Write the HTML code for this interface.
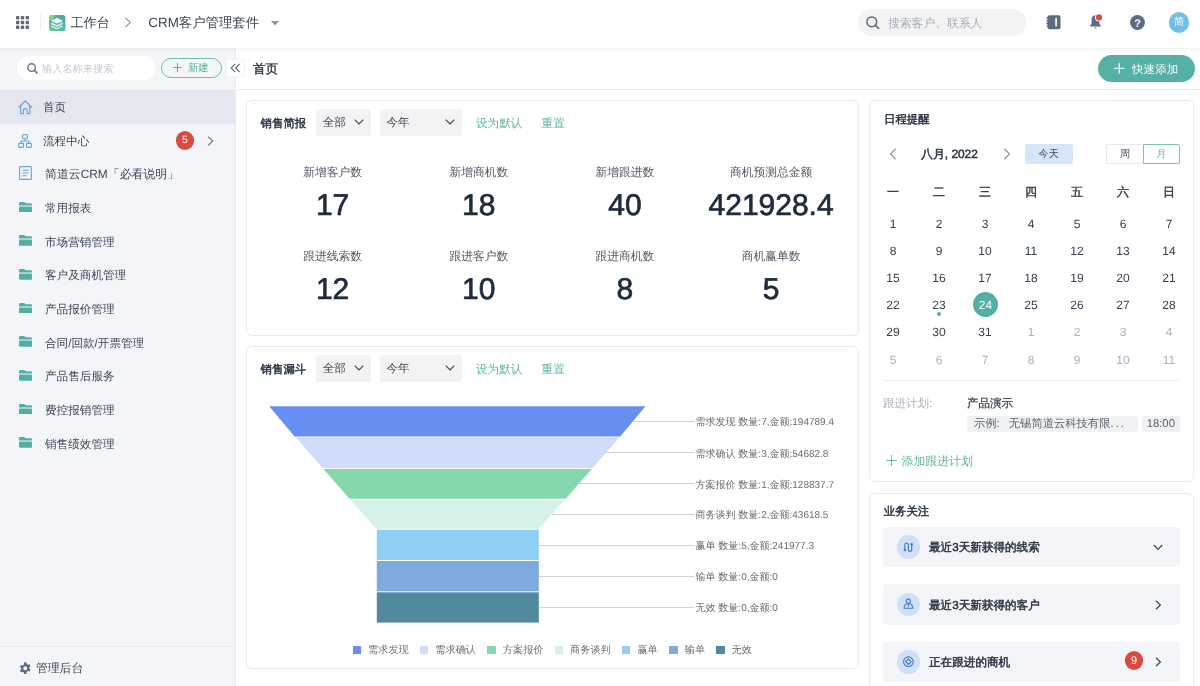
<!DOCTYPE html>
<html><head><meta charset="utf-8">
<style>
*{box-sizing:border-box;margin:0;padding:0}
html,body{width:1200px;height:686px;overflow:hidden;background:#fff;text-rendering:geometricPrecision;font-family:"Liberation Sans",sans-serif;color:#3b4656}
.a{position:absolute;white-space:nowrap}
svg{display:block}
#hdr{position:absolute;left:0;top:0;width:1200px;height:48px;background:#fff;z-index:3;box-shadow:0 1px 4px rgba(0,0,0,0.08)}
#side{position:absolute;left:0;top:48px;width:236px;height:638px;background:#f4f5f9;border-right:1px solid #e9eaee}
.nav{position:absolute;left:0;width:235px;height:33.6px}
.nav .t{position:absolute;left:43px;top:1px;line-height:33.6px;font-size:11.6px;color:#3b4656}
.nav .ic{position:absolute;left:18px;top:10px}
.card{position:absolute;background:#fff;border:1px solid #ebebeb;border-radius:6px;box-shadow:0 0 1px rgba(0,0,0,0.04)}
.dd{position:absolute;background:#f3f3f4;border-radius:3px;height:26.6px;font-size:11.6px;line-height:28.2px;color:#3b4656;padding-left:7px}
.lnk{color:#5db5a4;font-size:11.6px;margin-top:1.2px}
.stl{font-size:11.75px;margin-top:1px;color:#535a66;text-align:center;width:146px}
.stn{font-size:30px;color:#1e2b3c;-webkit-text-stroke:0.7px #1e2b3c;text-align:center;width:146px;margin-top:2.3px}
.ctl{font-size:11.4px;position:absolute;margin-top:1.5px;color:#283240;-webkit-text-stroke:0.45px #283240}
.cal{position:absolute;width:46px;text-align:center;font-size:12px;color:#364050}
.g{color:#a9b3c2}
.fl{font-size:10px;color:#6c6c6c;margin-top:2px}
.lg{font-size:10.2px;margin-left:-1px;margin-top:1px;color:#6e6e6e}
.bz{position:absolute;left:883px;width:296.8px;height:40.6px;background:#f3f5f9;border-radius:4px}
.bz .ci{position:absolute;left:13.6px;top:8.6px;width:23.6px;height:23.6px;border-radius:50%;background:#cfe0f7}
.bz .t{position:absolute;left:46px;top:1.5px;line-height:40.6px;font-size:11.6px;color:#283240;-webkit-text-stroke:0.45px #283240}
</style></head>
<body>
<div id="root" style="position:absolute;left:0;top:0;width:1200px;height:686px;will-change:transform">
<!-- HEADER -->
<div id="hdr">
  <svg class="a" style="left:16px;top:16px" width="13" height="13" viewBox="0 0 13 13" fill="#5d6b82">
    <rect x="0" y="0" width="3.4" height="3.4" rx="0.8"/><rect x="4.8" y="0" width="3.4" height="3.4" rx="0.8"/><rect x="9.6" y="0" width="3.4" height="3.4" rx="0.8"/>
    <rect x="0" y="4.8" width="3.4" height="3.4" rx="0.8"/><rect x="4.8" y="4.8" width="3.4" height="3.4" rx="0.8"/><rect x="9.6" y="4.8" width="3.4" height="3.4" rx="0.8"/>
    <rect x="0" y="9.6" width="3.4" height="3.4" rx="0.8"/><rect x="4.8" y="9.6" width="3.4" height="3.4" rx="0.8"/><rect x="9.6" y="9.6" width="3.4" height="3.4" rx="0.8"/>
  </svg>
  <div class="a" style="left:40px;top:14px;width:1px;height:16px;background:#eceef2"></div>
  <svg class="a" style="left:49.2px;top:14.6px" width="16.6" height="16.4" viewBox="0 0 16.6 16.4">
    <defs><linearGradient id="lg1" x1="0" y1="1" x2="1" y2="0"><stop offset="0" stop-color="#6cc79b"/><stop offset="0.55" stop-color="#4eb2a0"/><stop offset="1" stop-color="#47a99f"/></linearGradient>
    <clipPath id="cp1"><rect x="0" y="0" width="16.6" height="16.4" rx="3.3"/></clipPath></defs>
    <g clip-path="url(#cp1)">
    <rect x="0" y="0" width="16.6" height="16.4" fill="url(#lg1)"/>
    <circle cx="0" cy="0" r="5.6" fill="#8dd07e"/>
    <path d="M9 16.4 L16.6 9 V16.4 Z" fill="#5bc2a2" opacity="0.6"/>
    </g>
    <path d="M2.0 5.7 L8.3 2.9 L14.0 5.9 L7.8 8.4 Z" fill="#fff"/>
    <path d="M2.2 8.3 L7.8 10.9 L13.9 8.2" fill="none" stroke="#fff" stroke-opacity="0.85" stroke-width="1.5"/>
    <path d="M2.2 11.1 L7.8 13.6 L13.9 11.0" fill="none" stroke="#fff" stroke-opacity="0.75" stroke-width="1.5"/>
  </svg>
  <div class="a" style="left:70.5px;top:13px;font-size:13.1px;line-height:20px;color:#3b4656">工作台</div>
  <svg class="a" style="left:124px;top:17px" width="8" height="11" viewBox="0 0 8 11"><path d="M1.5 0.8 L6.3 5.5 L1.5 10.2" fill="none" stroke="#8c97a8" stroke-width="1.1"/></svg>
  <div class="a" style="left:148.3px;top:12.5px;font-size:13.4px;line-height:20px;color:#3b4656">CRM客户管理套件</div>
  <svg class="a" style="left:270.5px;top:21px" width="8" height="5" viewBox="0 0 8 5"><path d="M0 0 L8 0 L4 4.5 Z" fill="#8a98ae"/></svg>

  <div class="a" style="left:858px;top:9px;width:168px;height:27px;border-radius:14px;background:#f3f3f4"></div>
  <svg class="a" style="left:866px;top:16.4px" width="14" height="13" viewBox="0 0 14 13"><circle cx="5.8" cy="5.8" r="4.9" fill="none" stroke="#5d6b82" stroke-width="1.5"/><path d="M9.4 9.4 L12.6 12.4" stroke="#5d6b82" stroke-width="1.6" stroke-linecap="round"/></svg>
  <div class="a" style="left:888px;top:13.8px;font-size:11.8px;line-height:19px;color:#a6aebb">搜索客户、联系人</div>

  <svg class="a" style="left:1045.5px;top:14.5px" width="15" height="15" viewBox="0 0 15 15">
    <rect x="1.5" y="0.2" width="13" height="14" rx="2" fill="#5d6b82"/>
    <rect x="9.3" y="2.8" width="1.6" height="8.6" fill="#fff"/>
    <rect x="0.3" y="2.6" width="2.4" height="1.2" rx="0.6" fill="#5d6b82"/><rect x="0.3" y="5.2" width="2.4" height="1.2" rx="0.6" fill="#5d6b82"/><rect x="0.3" y="7.8" width="2.4" height="1.2" rx="0.6" fill="#5d6b82"/><rect x="0.3" y="10.4" width="2.4" height="1.2" rx="0.6" fill="#5d6b82"/>
  </svg>
  <svg class="a" style="left:1088px;top:13px" width="16" height="17" viewBox="0 0 16 17">
    <path d="M7.5 2.2 C4.6 2.2 3.6 4.8 3.6 7 L3.6 10.6 L1.8 13.4 L13.2 13.4 L11.4 10.6 L11.4 7 C11.4 4.8 10.4 2.2 7.5 2.2 Z" fill="#5d6b82"/>
    <path d="M5.8 14.4 Q7.5 16.6 9.2 14.4 Z" fill="#5d6b82"/>
    <circle cx="11" cy="4.4" r="4.2" fill="#fff"/>
    <circle cx="11" cy="4.4" r="3.1" fill="#df4b41"/>
  </svg>
  <svg class="a" style="left:1130px;top:15.2px" width="15" height="15" viewBox="0 0 15 15"><circle cx="7.5" cy="7.5" r="7.4" fill="#5d6b82"/><text x="7.5" y="11.6" text-anchor="middle" font-family="Liberation Sans" font-weight="bold" font-size="11" fill="#fff">?</text></svg>
  <div class="a" style="left:1168.7px;top:12.3px;width:20.6px;height:20.6px;border-radius:50%;background:#70bfe7;color:#fff;font-size:10.2px;line-height:21.6px;text-align:center">简</div>
</div>

<!-- SIDEBAR -->
<div id="side">
  <div class="a" style="left:17px;top:8px;width:138px;height:24px;border-radius:12px;background:#fff"></div>
  <svg class="a" style="left:26.5px;top:14.8px" width="11" height="11" viewBox="0 0 11 11"><circle cx="4.6" cy="4.6" r="3.8" fill="none" stroke="#656f82" stroke-width="1.4"/><path d="M7.4 7.4 L10 10" stroke="#656f82" stroke-width="1.5" stroke-linecap="round"/></svg>
  <div class="a" style="left:42px;top:13.8px;font-size:10.2px;line-height:16px;color:#c5cad3">输入名称来搜索</div>
  <div class="a" style="left:160.5px;top:10px;width:61.5px;height:20px;border-radius:10px;border:1px solid #6fbfb0;background:transparent"></div>
  <svg class="a" style="left:173px;top:15px" width="9" height="9" viewBox="0 0 9 9"><path d="M4.5 0 V9 M0 4.5 H9" stroke="#5db3a3" stroke-width="1.1"/></svg>
  <div class="a" style="left:188px;top:13.2px;font-size:10.25px;line-height:16px;color:#5db3a3">新建</div>

  <div class="nav" style="top:42.00px;background:#e4e7ef"><svg class="ic" style="left:18px;top:9.5px" width="15" height="15" viewBox="0 0 15 15"><path d="M1.0 7.0 L7.25 1.0 L13.5 7.0 M2.7 5.6 V13.6 H5.4 V10.4 Q5.4 8.6 7.25 8.6 Q9.1 8.6 9.1 10.4 V13.6 H11.8 V5.6" fill="none" stroke="#6aa3d8" stroke-width="1.15" stroke-linejoin="round" stroke-linecap="round"/></svg><div class="t">首页</div></div>
  <div class="nav" style="top:75.67px"><svg class="ic" style="left:18px;top:10px" width="14" height="14" viewBox="0 0 14 14" fill="none" stroke="#6aa3d8" stroke-width="1.15"><rect x="4.6" y="0.7" width="4.8" height="4" rx="0.6"/><rect x="0.7" y="9.3" width="4.8" height="4" rx="0.6"/><rect x="8.5" y="9.3" width="4.8" height="4" rx="0.6"/><path d="M7 4.7 V7 M3.1 9.3 V7 H10.9 V9.3"/></svg><div class="t">流程中心</div>
    <div class="a" style="left:175.5px;top:7.8px;width:18.6px;height:18.6px;border-radius:50%;background:#d94a3f;color:#fff;font-size:10.5px;line-height:18.6px;text-align:center">5</div>
    <svg class="a" style="left:206.6px;top:12px" width="7" height="10" viewBox="0 0 7 10"><path d="M1 0.6 L5.8 5 L1 9.4" fill="none" stroke="#6b7689" stroke-width="1.2"/></svg>
  </div>
  <div class="nav" style="top:109.34px"><svg class="ic" style="left:19px;top:9px" width="13" height="14" viewBox="0 0 13 14" fill="none" stroke="#6aa3d8" stroke-width="1.1"><rect x="0.6" y="0.6" width="11.8" height="12.8" rx="1"/><path d="M3.4 4.3 H9.6 M3.4 7 H9.6 M3.4 9.7 H7.6"/></svg><div class="t" style="left:45px;font-size:11.9px">简道云CRM「必看说明」</div></div>
  <div class="nav" style="top:143.01px"><svg class="ic" style="left:18.6px;top:10.6px" width="13.2" height="10.8" viewBox="0 0 13.2 10.8" fill="#52ada3"><path d="M0 1.3 Q0 0 1.3 0 H5.3 L6.7 1.3 H11.9 Q13.2 1.3 13.2 2.6 V3.6 H0 Z"/><rect x="0" y="4.6" width="13.2" height="6.2" rx="1.3"/></svg><div class="t" style="left:45px">常用报表</div></div>
  <div class="nav" style="top:176.68px"><svg class="ic" style="left:18.6px;top:10.6px" width="13.2" height="10.8" viewBox="0 0 13.2 10.8" fill="#52ada3"><path d="M0 1.3 Q0 0 1.3 0 H5.3 L6.7 1.3 H11.9 Q13.2 1.3 13.2 2.6 V3.6 H0 Z"/><rect x="0" y="4.6" width="13.2" height="6.2" rx="1.3"/></svg><div class="t" style="left:45px">市场营销管理</div></div>
  <div class="nav" style="top:210.35px"><svg class="ic" style="left:18.6px;top:10.6px" width="13.2" height="10.8" viewBox="0 0 13.2 10.8" fill="#52ada3"><path d="M0 1.3 Q0 0 1.3 0 H5.3 L6.7 1.3 H11.9 Q13.2 1.3 13.2 2.6 V3.6 H0 Z"/><rect x="0" y="4.6" width="13.2" height="6.2" rx="1.3"/></svg><div class="t" style="left:45px">客户及商机管理</div></div>
  <div class="nav" style="top:244.02px"><svg class="ic" style="left:18.6px;top:10.6px" width="13.2" height="10.8" viewBox="0 0 13.2 10.8" fill="#52ada3"><path d="M0 1.3 Q0 0 1.3 0 H5.3 L6.7 1.3 H11.9 Q13.2 1.3 13.2 2.6 V3.6 H0 Z"/><rect x="0" y="4.6" width="13.2" height="6.2" rx="1.3"/></svg><div class="t" style="left:45px">产品报价管理</div></div>
  <div class="nav" style="top:277.69px"><svg class="ic" style="left:18.6px;top:10.6px" width="13.2" height="10.8" viewBox="0 0 13.2 10.8" fill="#52ada3"><path d="M0 1.3 Q0 0 1.3 0 H5.3 L6.7 1.3 H11.9 Q13.2 1.3 13.2 2.6 V3.6 H0 Z"/><rect x="0" y="4.6" width="13.2" height="6.2" rx="1.3"/></svg><div class="t" style="left:45px">合同/回款/开票管理</div></div>
  <div class="nav" style="top:311.36px"><svg class="ic" style="left:18.6px;top:10.6px" width="13.2" height="10.8" viewBox="0 0 13.2 10.8" fill="#52ada3"><path d="M0 1.3 Q0 0 1.3 0 H5.3 L6.7 1.3 H11.9 Q13.2 1.3 13.2 2.6 V3.6 H0 Z"/><rect x="0" y="4.6" width="13.2" height="6.2" rx="1.3"/></svg><div class="t" style="left:45px">产品售后服务</div></div>
  <div class="nav" style="top:345.03px"><svg class="ic" style="left:18.6px;top:10.6px" width="13.2" height="10.8" viewBox="0 0 13.2 10.8" fill="#52ada3"><path d="M0 1.3 Q0 0 1.3 0 H5.3 L6.7 1.3 H11.9 Q13.2 1.3 13.2 2.6 V3.6 H0 Z"/><rect x="0" y="4.6" width="13.2" height="6.2" rx="1.3"/></svg><div class="t" style="left:45px">费控报销管理</div></div>
  <div class="nav" style="top:378.70px"><svg class="ic" style="left:18.6px;top:10.6px" width="13.2" height="10.8" viewBox="0 0 13.2 10.8" fill="#52ada3"><path d="M0 1.3 Q0 0 1.3 0 H5.3 L6.7 1.3 H11.9 Q13.2 1.3 13.2 2.6 V3.6 H0 Z"/><rect x="0" y="4.6" width="13.2" height="6.2" rx="1.3"/></svg><div class="t" style="left:45px">销售绩效管理</div></div>
  <div class="a" style="left:0;top:598px;width:235px;height:1px;background:#e8e9ee"></div>
  <svg class="a" style="left:19px;top:613.5px" width="12.5" height="12.5" viewBox="0 0 24 24"><path fill="#5d6b82" fill-rule="evenodd" d="M10 0.5h4l.7 3.2c.9.3 1.7.8 2.4 1.4l3.1-1 2 3.5-2.4 2.2c.2.9.2 1.9 0 2.8l2.4 2.2-2 3.5-3.1-1c-.7.6-1.5 1.1-2.4 1.4L14 23.5h-4l-.7-3.2c-.9-.3-1.7-.8-2.4-1.4l-3.1 1-2-3.5 2.4-2.2c-.2-.9-.2-1.9 0-2.8L1.8 9.2l2-3.5 3.1 1c.7-.6 1.5-1.1 2.4-1.4z M12 8.2a3.8 3.8 0 1 0 0 7.6 3.8 3.8 0 0 0 0-7.6z"/></svg>
  <div class="a" style="left:36px;top:612.3px;font-size:11.8px;line-height:16px;color:#3b4656">管理后台</div>
</div>

<!-- MAIN SUBHEADER -->
<div class="a" style="left:236px;top:48px;width:964px;height:41.5px;border-bottom:1px solid #ececee;background:#fff"></div>
<div class="a" style="left:225.9px;top:58.7px;width:19.4px;height:18.6px;border-radius:3px;background:#fff;border:1px solid #eef0f3;z-index:2"></div>
<svg class="a" style="left:229.8px;top:63px;z-index:2" width="11" height="10" viewBox="0 0 11 10"><path d="M5.2 0.8 L1.2 5 L5.2 9.2 M9.6 0.8 L5.6 5 L9.6 9.2" fill="none" stroke="#5d6b82" stroke-width="1.2"/></svg>
<div class="a" style="left:253px;top:59px;font-size:12.6px;line-height:20px;color:#2b3441;-webkit-text-stroke:0.35px #2b3441">首页</div>
<div class="a" style="left:1098px;top:55px;width:97px;height:27px;border-radius:13.5px;background:#55b0a5"></div>
<svg class="a" style="left:1114px;top:63.3px" width="10.5" height="10.5" viewBox="0 0 10 10"><path d="M5 0 V10 M0 5 H10" stroke="#fff" stroke-width="1.1"/></svg>
<div class="a" style="left:1132px;top:61.7px;font-size:11.6px;line-height:16px;color:#fff">快速添加</div>

<!-- CARD 1 -->
<div class="card" style="left:246px;top:100.3px;width:612.5px;height:235.7px"></div>
<div class="a ctl" style="left:260.6px;top:114px;line-height:16px">销售简报</div>
<div class="dd" style="left:315.7px;top:109.4px;width:55.3px">全部</div>
<svg class="a" style="left:353.5px;top:119px" width="10" height="6" viewBox="0 0 10 6"><path d="M0.7 0.7 L5 5 L9.3 0.7" fill="none" stroke="#3b4656" stroke-width="1.2"/></svg>
<div class="dd" style="left:379.5px;top:109.4px;width:82.2px">今年</div>
<svg class="a" style="left:444.5px;top:119px" width="10" height="6" viewBox="0 0 10 6"><path d="M0.7 0.7 L5 5 L9.3 0.7" fill="none" stroke="#3b4656" stroke-width="1.2"/></svg>
<div class="a lnk" style="left:476px;top:114.5px;line-height:16px">设为默认</div>
<div class="a lnk" style="left:541.6px;top:114.5px;line-height:16px">重置</div>
<div class="a stl" style="left:259.6px;top:164.0px;line-height:16px">新增客户数</div>
<div class="a stn" style="left:259.6px;top:186.0px;line-height:36px">17</div>
<div class="a stl" style="left:405.8px;top:164.0px;line-height:16px">新增商机数</div>
<div class="a stn" style="left:405.8px;top:186.0px;line-height:36px">18</div>
<div class="a stl" style="left:551.9px;top:164.0px;line-height:16px">新增跟进数</div>
<div class="a stn" style="left:551.9px;top:186.0px;line-height:36px">40</div>
<div class="a stl" style="left:698.1px;top:164.0px;line-height:16px">商机预测总金额</div>
<div class="a stn" style="left:698.1px;top:186.0px;line-height:36px">421928.4</div>
<div class="a stl" style="left:259.6px;top:248.0px;line-height:16px">跟进线索数</div>
<div class="a stn" style="left:259.6px;top:270.0px;line-height:36px">12</div>
<div class="a stl" style="left:405.8px;top:248.0px;line-height:16px">跟进客户数</div>
<div class="a stn" style="left:405.8px;top:270.0px;line-height:36px">10</div>
<div class="a stl" style="left:551.9px;top:248.0px;line-height:16px">跟进商机数</div>
<div class="a stn" style="left:551.9px;top:270.0px;line-height:36px">8</div>
<div class="a stl" style="left:698.1px;top:248.0px;line-height:16px">商机赢单数</div>
<div class="a stn" style="left:698.1px;top:270.0px;line-height:36px">5</div>

<!-- CARD 2 -->
<div class="card" style="left:246px;top:346.4px;width:612.5px;height:322.6px"></div>
<div class="a ctl" style="left:260.6px;top:360px;line-height:16px">销售漏斗</div>
<div class="dd" style="left:315.7px;top:355.4px;width:55.3px">全部</div>
<svg class="a" style="left:353.5px;top:365px" width="10" height="6" viewBox="0 0 10 6"><path d="M0.7 0.7 L5 5 L9.3 0.7" fill="none" stroke="#3b4656" stroke-width="1.2"/></svg>
<div class="dd" style="left:379.5px;top:355.4px;width:82.2px">今年</div>
<svg class="a" style="left:444.5px;top:365px" width="10" height="6" viewBox="0 0 10 6"><path d="M0.7 0.7 L5 5 L9.3 0.7" fill="none" stroke="#3b4656" stroke-width="1.2"/></svg>
<div class="a lnk" style="left:476px;top:360.5px;line-height:16px">设为默认</div>
<div class="a lnk" style="left:541.6px;top:360.5px;line-height:16px">重置</div>
<svg class="a" style="left:0;top:0" width="1200" height="686" viewBox="0 0 1200 686">
  <polygon points="269.2,406.2 645.5,406.2 620.2,436.4 294.6,436.4" fill="#678ef0"/>
  <polygon points="296.0,437.4 619.4,437.4 592.6,467.9 322.6,467.9" fill="#d1dcf8"/>
  <polygon points="323.4,468.9 591.8,468.9 565.7,498.7 349.5,498.7" fill="#84d8ab"/>
  <polygon points="350.4,499.7 565.0,499.7 539.1,528.7 376.3,528.7" fill="#d6f1e5"/>
  <rect x="376.8" y="529.7" width="162" height="30.3" fill="#8ecff3"/>
  <rect x="376.8" y="561" width="162" height="30.3" fill="#7eaadd"/>
  <rect x="376.8" y="592.3" width="162" height="30.3" fill="#51899e"/>
  <g stroke="#d2d2d2" stroke-width="1">
    <path d="M632.8 421.5 H694.5"/><path d="M605.8 452.5 H694.5"/><path d="M578.8 483.5 H694.5"/><path d="M552 514.5 H694.5"/>
    <path d="M538.8 545.5 H694.5"/><path d="M538.8 576.5 H694.5"/><path d="M538.8 607.5 H694.5"/>
  </g>
</svg>
<div class="a fl" style="left:695.6px;top:414.3px;line-height:14px">需求发现 数量:7,金额:194789.4</div>
<div class="a fl" style="left:695.6px;top:445.5px;line-height:14px">需求确认 数量:3,金额:54682.8</div>
<div class="a fl" style="left:695.6px;top:476.8px;line-height:14px">方案报价 数量:1,金额:128837.7</div>
<div class="a fl" style="left:695.6px;top:507.2px;line-height:14px">商务谈判 数量:2,金额:43618.5</div>
<div class="a fl" style="left:695.6px;top:538.0px;line-height:14px">赢单 数量:5,金额:241977.3</div>
<div class="a fl" style="left:695.6px;top:569.0px;line-height:14px">输单 数量:0,金额:0</div>
<div class="a fl" style="left:695.6px;top:600.3px;line-height:14px">无效 数量:0,金额:0</div>
<div class="a" style="left:352.5px;top:645.5px;width:8.6px;height:8.4px;background:#678ef0"></div><div class="a lg" style="left:369.0px;top:642px;line-height:15px">需求发现</div>
<div class="a" style="left:419.8px;top:645.5px;width:8.6px;height:8.4px;background:#d1dcf8"></div><div class="a lg" style="left:436.3px;top:642px;line-height:15px">需求确认</div>
<div class="a" style="left:487.3px;top:645.5px;width:8.6px;height:8.4px;background:#84d8ab"></div><div class="a lg" style="left:503.8px;top:642px;line-height:15px">方案报价</div>
<div class="a" style="left:554.5px;top:645.5px;width:8.6px;height:8.4px;background:#d6f1e5"></div><div class="a lg" style="left:571.0px;top:642px;line-height:15px">商务谈判</div>
<div class="a" style="left:621.9px;top:645.5px;width:8.6px;height:8.4px;background:#8ecff3"></div><div class="a lg" style="left:638.4px;top:642px;line-height:15px">赢单</div>
<div class="a" style="left:669.2px;top:645.5px;width:8.6px;height:8.4px;background:#7eaadd"></div><div class="a lg" style="left:685.7px;top:642px;line-height:15px">输单</div>
<div class="a" style="left:716.0px;top:645.5px;width:8.6px;height:8.4px;background:#51899e"></div><div class="a lg" style="left:732.5px;top:642px;line-height:15px">无效</div>

<!-- RIGHT CARD 1 -->
<div class="card" style="left:869px;top:100.3px;width:324.8px;height:381.3px"></div>
<div class="a ctl" style="left:884px;top:110px;line-height:16px">日程提醒</div>
<svg class="a" style="left:888.5px;top:148px" width="8" height="12" viewBox="0 0 8 12"><path d="M6.8 0.8 L1.4 6 L6.8 11.2" fill="none" stroke="#8c97a8" stroke-width="1.2"/></svg>
<div class="a" style="left:921px;top:146.3px;font-size:11.9px;line-height:16px;color:#2b3441;-webkit-text-stroke:0.5px #2b3441">八月, 2022</div>
<svg class="a" style="left:1002.5px;top:148px" width="8" height="12" viewBox="0 0 8 12"><path d="M1.2 0.8 L6.6 6 L1.2 11.2" fill="none" stroke="#8c97a8" stroke-width="1.2"/></svg>
<div class="a" style="left:1024.5px;top:143.5px;width:48.5px;height:20.5px;border-radius:2px;background:#d6e5f9;font-size:10.2px;line-height:21.6px;text-align:center;color:#3b4656">今天</div>
<div class="a" style="left:1106.2px;top:143.5px;width:37px;height:20.5px;border:1px solid #e8e9ec;border-right:none;border-radius:2px 0 0 2px;font-size:10.2px;line-height:19.4px;text-align:center;color:#3b4656">周</div>
<div class="a" style="left:1143px;top:143.5px;width:36.6px;height:20.5px;border:1px solid #7cc6b6;border-radius:0 2px 2px 0;font-size:10.2px;line-height:19.4px;text-align:center;color:#6abcab">月</div>
<div class="cal" style="left:870.0px;top:184px;line-height:16px;-webkit-text-stroke:0.4px #2b3441">一</div>
<div class="cal" style="left:916.0px;top:184px;line-height:16px;-webkit-text-stroke:0.4px #2b3441">二</div>
<div class="cal" style="left:962.0px;top:184px;line-height:16px;-webkit-text-stroke:0.4px #2b3441">三</div>
<div class="cal" style="left:1008.0px;top:184px;line-height:16px;-webkit-text-stroke:0.4px #2b3441">四</div>
<div class="cal" style="left:1054.0px;top:184px;line-height:16px;-webkit-text-stroke:0.4px #2b3441">五</div>
<div class="cal" style="left:1100.0px;top:184px;line-height:16px;-webkit-text-stroke:0.4px #2b3441">六</div>
<div class="cal" style="left:1146.0px;top:184px;line-height:16px;-webkit-text-stroke:0.4px #2b3441">日</div>
<div class="cal" style="left:870.0px;top:216.0px;line-height:16px">1</div>
<div class="cal" style="left:916.0px;top:216.0px;line-height:16px">2</div>
<div class="cal" style="left:962.0px;top:216.0px;line-height:16px">3</div>
<div class="cal" style="left:1008.0px;top:216.0px;line-height:16px">4</div>
<div class="cal" style="left:1054.0px;top:216.0px;line-height:16px">5</div>
<div class="cal" style="left:1100.0px;top:216.0px;line-height:16px">6</div>
<div class="cal" style="left:1146.0px;top:216.0px;line-height:16px">7</div>
<div class="cal" style="left:870.0px;top:242.7px;line-height:16px">8</div>
<div class="cal" style="left:916.0px;top:242.7px;line-height:16px">9</div>
<div class="cal" style="left:962.0px;top:242.7px;line-height:16px">10</div>
<div class="cal" style="left:1008.0px;top:242.7px;line-height:16px">11</div>
<div class="cal" style="left:1054.0px;top:242.7px;line-height:16px">12</div>
<div class="cal" style="left:1100.0px;top:242.7px;line-height:16px">13</div>
<div class="cal" style="left:1146.0px;top:242.7px;line-height:16px">14</div>
<div class="cal" style="left:870.0px;top:269.5px;line-height:16px">15</div>
<div class="cal" style="left:916.0px;top:269.5px;line-height:16px">16</div>
<div class="cal" style="left:962.0px;top:269.5px;line-height:16px">17</div>
<div class="cal" style="left:1008.0px;top:269.5px;line-height:16px">18</div>
<div class="cal" style="left:1054.0px;top:269.5px;line-height:16px">19</div>
<div class="cal" style="left:1100.0px;top:269.5px;line-height:16px">20</div>
<div class="cal" style="left:1146.0px;top:269.5px;line-height:16px">21</div>
<div class="cal" style="left:870.0px;top:296.6px;line-height:16px">22</div>
<div class="cal" style="left:916.0px;top:296.6px;line-height:16px">23</div>
<div class="a" style="left:972.7px;top:291.8px;width:25.6px;height:25.6px;border-radius:50%;background:#53aea3"></div><div class="cal" style="left:962.5px;top:296.6px;line-height:16px;color:#fff">24</div>
<div class="cal" style="left:1008.0px;top:296.6px;line-height:16px">25</div>
<div class="cal" style="left:1054.0px;top:296.6px;line-height:16px">26</div>
<div class="cal" style="left:1100.0px;top:296.6px;line-height:16px">27</div>
<div class="cal" style="left:1146.0px;top:296.6px;line-height:16px">28</div>
<div class="cal" style="left:870.0px;top:324.2px;line-height:16px">29</div>
<div class="cal" style="left:916.0px;top:324.2px;line-height:16px">30</div>
<div class="cal" style="left:962.0px;top:324.2px;line-height:16px">31</div>
<div class="cal g" style="left:1008.0px;top:324.2px;line-height:16px">1</div>
<div class="cal g" style="left:1054.0px;top:324.2px;line-height:16px">2</div>
<div class="cal g" style="left:1100.0px;top:324.2px;line-height:16px">3</div>
<div class="cal g" style="left:1146.0px;top:324.2px;line-height:16px">4</div>
<div class="cal g" style="left:870.0px;top:351.6px;line-height:16px">5</div>
<div class="cal g" style="left:916.0px;top:351.6px;line-height:16px">6</div>
<div class="cal g" style="left:962.0px;top:351.6px;line-height:16px">7</div>
<div class="cal g" style="left:1008.0px;top:351.6px;line-height:16px">8</div>
<div class="cal g" style="left:1054.0px;top:351.6px;line-height:16px">9</div>
<div class="cal g" style="left:1100.0px;top:351.6px;line-height:16px">10</div>
<div class="cal g" style="left:1146.0px;top:351.6px;line-height:16px">11</div>
<div class="a" style="left:937px;top:312.3px;width:4px;height:4px;border-radius:50%;background:#53aea3"></div>
<div class="a" style="left:883px;top:380px;width:296.6px;height:1px;background:#e9ebee"></div>
<div class="a" style="left:883px;top:395.8px;font-size:11.5px;line-height:16px;color:#a8b0bb">跟进计划:</div>
<div class="a" style="left:967px;top:395.6px;font-size:11.5px;line-height:16px;color:#2b3441;-webkit-text-stroke:0.2px #2b3441">产品演示</div>
<div class="a" style="left:967px;top:416px;width:171.3px;height:16.2px;border-radius:3px;background:#f0f1f3;font-size:11.3px;line-height:16.2px;color:#5a6270;padding-left:7px">示例<span style="display:inline-block;width:12.2px">:</span>无锡简道云科技有限<span style="letter-spacing:2px">...</span></div>
<div class="a" style="left:1142px;top:416px;width:37.6px;height:16.2px;border-radius:3px;background:#f0f1f3;font-size:11.3px;line-height:16.2px;color:#5a6270;text-align:center">18:00</div>
<svg class="a" style="left:885.5px;top:455px" width="11" height="11" viewBox="0 0 10 10"><path d="M5 0 V10 M0 5 H10" stroke="#6cbcab" stroke-width="1"/></svg>
<div class="a" style="left:901.5px;top:453px;font-size:11.9px;line-height:16px;color:#5db3a3">添加跟进计划</div>

<!-- RIGHT CARD 2 -->
<div class="card" style="left:869px;top:492.9px;width:324.8px;height:220px"></div>
<div class="a ctl" style="left:883.7px;top:502px;line-height:16px">业务关注</div>
<div class="bz" style="top:526.5px"><div class="ci"></div>
  <svg class="a" style="left:0;top:0" width="40" height="40" viewBox="0 0 40 40" fill="none" stroke="#3f78d0" stroke-width="1.1"><path d="M21.8 23.1 V18.2 Q21.8 16 23.6 16 Q25.4 16 25.4 18.2 V22.2 Q25.4 24.4 27.05 24.4 Q28.7 24.4 28.7 22.2 V17.3"/><circle cx="21.8" cy="23.1" r="1.25" fill="#3f78d0" stroke="none"/><circle cx="28.7" cy="17.3" r="1.25" fill="#3f78d0" stroke="none"/></svg>
  <div class="t">最近3天新获得的线索</div>
  <svg class="a" style="left:269.8px;top:17px" width="10" height="7" viewBox="0 0 10 7"><path d="M0.8 1 L5 5.3 L9.2 1" fill="none" stroke="#3b4656" stroke-width="1.2"/></svg>
</div>
<div class="bz" style="top:584.2px"><div class="ci"></div>
  <svg class="a" style="left:0;top:0" width="40" height="40" viewBox="0 0 40 40" fill="none" stroke="#3f78d0" stroke-width="1.1"><circle cx="25.3" cy="17.2" r="2.1"/><path d="M21 24.3 Q21.1 19.7 25.4 19.5 Q29.7 19.7 29.8 24.3 Z"/><path d="M25.4 19.8 V22.8"/></svg>
  <div class="t">最近3天新获得的客户</div>
  <svg class="a" style="left:272px;top:15.5px" width="7" height="10" viewBox="0 0 7 10"><path d="M1 0.8 L5.4 5 L1 9.2" fill="none" stroke="#3b4656" stroke-width="1.2"/></svg>
</div>
<div class="bz" style="top:641.6px"><div class="ci"></div>
  <svg class="a" style="left:0;top:0" width="40" height="40" viewBox="0 0 40 40" fill="none" stroke="#3f78d0" stroke-width="1.1"><circle cx="25.4" cy="19.7" r="4.8"/><path d="M25.4 17 L28.1 19.7 L25.4 22.4 L22.7 19.7 Z"/></svg>
  <div class="t">正在跟进的商机</div>
  <div class="a" style="left:241.8px;top:9.8px;width:18.6px;height:18.6px;border-radius:50%;background:#d94a3f;color:#fff;font-size:11px;line-height:20.4px;text-align:center">9</div>
  <svg class="a" style="left:272px;top:15.5px" width="7" height="10" viewBox="0 0 7 10"><path d="M1 0.8 L5.4 5 L1 9.2" fill="none" stroke="#3b4656" stroke-width="1.2"/></svg>
</div>
</div>
</body></html>
